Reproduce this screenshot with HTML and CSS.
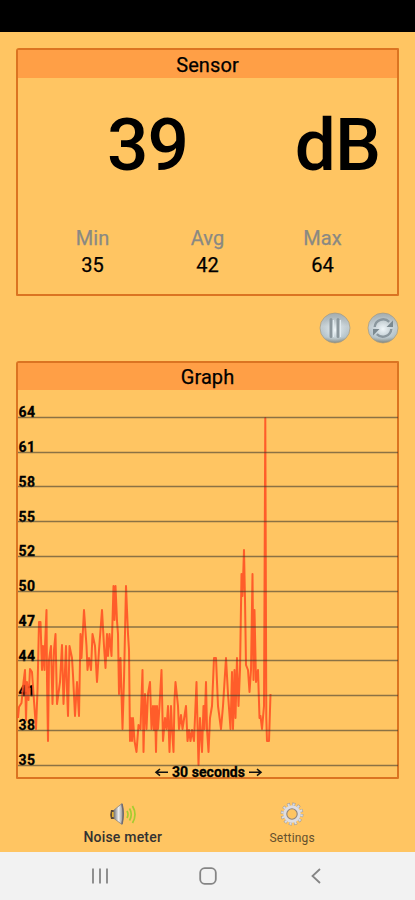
FILE: index.html
```html
<!DOCTYPE html>
<html lang="en">
<head>
    <meta charset="UTF-8">
    <meta name="viewport" content="width=device-width, initial-scale=1.0">
    <title>Noise meter</title>
    <link rel="stylesheet" href="styles.css">
</head>
<body>

<div class="status-bar"></div>

<div class="app">
    <!-- Current reading -->
    <div class="panel sensor">
        <div class="panel-title">Sensor</div>
        <div class="reading">
            <div class="value">39</div>
            <div class="unit">dB</div>
        </div>
        <div class="stats">
            <div class="stat"><span class="stat-name">Min</span><span>35</span></div>
            <div class="stat"><span class="stat-name">Avg</span><span>42</span></div>
            <div class="stat"><span class="stat-name">Max</span><span>64</span></div>
        </div>
    </div>

    <div class="controls">
        <svg width="32" height="32" viewBox="0 0 32 32">
            <defs>
                <linearGradient id="metal" x1="0" y1="0" x2="0" y2="1">
                    <stop offset="0" stop-color="#a3adb0"/>
                    <stop offset="0.45" stop-color="#c3cdd2"/>
                    <stop offset="0.8" stop-color="#b3c2c9"/>
                    <stop offset="1" stop-color="#80867f"/>
                </linearGradient>
                <radialGradient id="shine">
                    <stop offset="0" stop-color="#f1f7fa"/>
                    <stop offset="1" stop-color="#d5e0e5" stop-opacity="0"/>
                </radialGradient>
            </defs>
            <circle cx="16" cy="16" r="15" fill="url(#metal)" stroke="#a49a80" stroke-width="0.7"/>
            <circle cx="16" cy="18" r="13" fill="url(#shine)"/>
            <path d="M12 7.5v17M19 7.5v17" stroke="#8b979d" stroke-width="3" stroke-linecap="round"/>
            <path d="M14.4 8v17M21.4 8v17" stroke="#e3ecf0" stroke-width="1.2"/>
        </svg>
        <svg width="32" height="32" viewBox="0 0 32 32">
            <circle cx="16" cy="16" r="15" fill="url(#metal)" stroke="#a49a80" stroke-width="0.7"/>
            <circle cx="16" cy="17" r="13" fill="url(#shine)"/>
            <path d="M7.7 15a8.5 8.5 0 0 1 14.5-5.2M24.3 17a8.5 8.5 0 0 1-14.5 5.2" fill="none" stroke="#8a979e" stroke-width="2.4"/>
            <path d="M26 8.5v6.5h-6.5zM6 23.5v-6.5h6.5z" fill="#7b8990"/>
        </svg>
    </div>

    <!-- History -->
    <div class="panel graph">
        <div class="panel-title">Graph</div>
        <svg class="plot" width="379" height="388" viewBox="18 390 379 388">
            <g class="labels">
                <text x="18.5" y="417" textLength="16.5">64</text>
                <text x="18.5" y="452" textLength="16.5">61</text>
                <text x="18.5" y="487" textLength="16.5">58</text>
                <text x="18.5" y="522" textLength="16.5">55</text>
                <text x="18.5" y="556" textLength="16.5">52</text>
                <text x="18.5" y="591" textLength="16.5">50</text>
                <text x="18.5" y="626" textLength="16.5">47</text>
                <text x="18.5" y="661" textLength="16.5">44</text>
                <text x="18.5" y="696" textLength="16.5">41</text>
                <text x="18.5" y="730" textLength="16.5">38</text>
                <text x="18.5" y="765" textLength="16.5">35</text>
                <text x="172" y="777" textLength="73">30 seconds</text>
            </g>
            <polyline class="trace" points="18,718 19,707 21.5,703 23.5,682 25,670 26,720 27,682 28.5,700 30,669 32,672 33.5,694 36,729 37.5,690 39,622 40.5,622 42,670 43,646 44.5,670 45,646 46.5,610 47,680 48,741 49,660 51,646 52.5,704 54,650 55.5,634 57,704 60,682 62,645 63.5,704 65,670 66,646 67,690 68,716 69.5,646 72,658 73,675 75,716 77,682 79,716 80.5,634 81.5,658 84,610 86.5,646 87.5,670 89,658 91,670 92.5,634 95,646 97,682 99,650 102,610 104,646 105.5,668 107,634 108,656 109.5,634 111.5,656 113.5,586 114.5,620 115.5,586 117,621 118,634 119,694 120.5,658 122.5,729 124,680 126,586 128,634 129,650 130,741 131,718 132,741 133,718 134.5,741 136.5,752 138.5,725 140.5,729 142.5,670 143.5,752 145,694 146.5,729 148,694 150,682 151.5,729 153,706 154,730 155,706 156,752 157,706 158,729 159.5,706 161.5,670 163,741 165,718 166.5,729 168,706 169.5,752 171,706 172,729 173.5,752 174.5,700 175.5,682 178,706 179,729 181,715 182.5,729 186,706 187.5,741 189,730 190.5,741 192,730 194,741 196.5,682 197.5,725 198.5,765 200,718 202,752 203.5,706 204.5,729 206,682 207,729 208.5,752 210,718 212,706 214,658 216,658 218,706 221,729 223,706 226,658 228,694 230.5,729 232,672 233,729 234.5,670 235.5,718 237,658 238.5,706 240,670 241.5,574 242.5,596 244,550 245,600 246,665 248,670 249.5,692 251,670 252.5,574 253.5,680 254.5,610 256,682 258,670 259.5,718 260.5,716 262,729 264,706 265.3,418 266.3,718 267,741 269,741 270.5,694"/>
            <path class="grid" d="M18 417.5h380M18 452.5h380M18 486.5h380M18 521.5h380M18 556.5h380M18 591.5h380M18 627h380M18 660.5h380M18 695.5h380M18 730.5h380M18 765.5h380"/>
            <path class="arrow" d="M168 772.3h-11M160 769l-4 3.3 4 3.3M249 772.3h11M257 769l4 3.3-4 3.3"/>
        </svg>
    </div>

    <div class="tabs">
        <div class="tab active">
            <svg width="28" height="24" viewBox="0 0 28 24">
                <defs>
                    <linearGradient id="horn" x1="0" y1="0" x2="1" y2="0">
                        <stop offset="0" stop-color="#777"/>
                        <stop offset="0.5" stop-color="#eee"/>
                        <stop offset="1" stop-color="#888"/>
                    </linearGradient>
                </defs>
                <path d="M2 8h4v9H2q-1.5-4.500 0-9z" fill="#5d4932"/>
                <path d="M3 10h2v5H3z" fill="#e8b12c"/>
                <path d="M5 8L13 1.5q2.5 10.5 0 21L5 16.5z" fill="url(#horn)" stroke="#8b8580" stroke-width="0.8"/>
                <path d="M13 2q2.5 10 0 20" fill="none" stroke="#6f6b70" stroke-width="1.5"/>
                <path d="M18 9q2 3.5 0 7M20.5 6.5q3.5 6 0 12M23.500 4q5 8.500 0 17" fill="none" stroke="#a5cc30" stroke-width="1.7"/>
            </svg>
            <span>Noise meter</span>
        </div>
        <div class="tab">
            <svg width="24" height="24" viewBox="0 0 24 24">
                <circle cx="12" cy="12" r="9.7" fill="none" stroke="#9d9a9a" stroke-width="3.4" stroke-dasharray="2.9 2.18"/>
                <circle cx="12" cy="12" r="9.7" fill="none" stroke="#dddddf" stroke-width="2.4" stroke-dasharray="2 3.08" stroke-dashoffset="-.4"/>
                <circle cx="12" cy="12" r="7" fill="none" stroke="#dedde2" stroke-width="3.4"/>
                <circle cx="12" cy="12" r="5.2" fill="none" stroke="#8f8680" stroke-width="1.1"/>
            </svg>
            <span>Settings</span>
        </div>
    </div>
</div>

<!-- System navigation -->
<div class="nav-bar">
    <svg width="18" height="18" viewBox="0 0 18 18"><path d="M2 1.5v15M9 1.5v15M16 1.5v15"/></svg>
    <svg width="18" height="18" viewBox="0 0 18 18"><rect x="1.2" y="1.2" width="15.6" height="15.6" rx="4.5"/></svg>
    <svg width="18" height="18" viewBox="0 0 18 18"><path d="M13 2L5.500 9l7.500 7"/></svg>
</div>

</body>
</html>
```
FILE: styles.css
```css
* { box-sizing: border-box; }
body { margin: 0; width: 415px; height: 900px; font-family: Roboto, "Liberation Sans", sans-serif; color: #000; background-color: #ffc562; overflow: hidden; }
svg { display: block; }
.status-bar { height: 32px; background-color: #000; }
.app { height: 820px; padding: 16px 16px 0; }

.panel { border: 2px solid #db7422; border-radius: 3px 1px 1px 1px; }
.panel-title { height: 27px; line-height: 29px; text-align: center; font-size: 20px; letter-spacing: 0.1px; background-color: #ff9f46; -webkit-text-stroke: 0.25px #000; }
.sensor { height: 248px; }
.sensor .panel-title { height: 28px; line-height: 31px; }
.reading { display: flex; justify-content: space-between; height: 147px; padding: 26px 17px 0 89px; font-size: 73px; line-height: 82px; font-weight: 500; }
.value { letter-spacing: -1px; }
.unit { letter-spacing: -1px; }
.stats { display: grid; grid-template-columns: repeat(3, 115px); justify-content: center; }
.stat { display: flex; flex-direction: column; text-align: center; font-size: 20px; line-height: 27px; -webkit-text-stroke: 0.25px; }
.stat-name { color: #8a8983; }

.controls { display: flex; justify-content: flex-end; gap: 16px; height: 65px; padding-top: 16px; }

.graph { height: 418px; }
.plot { overflow: visible; }
.trace { fill: none; stroke: #ff4f22; stroke-opacity: 0.88; stroke-width: 2; stroke-linejoin: round; }
.grid { fill: none; stroke: #3d3a30; stroke-opacity: 0.6; stroke-width: 1.3; }
.labels { font-size: 14px; font-weight: 700; stroke: #000; stroke-width: 0.3; }
.arrow { fill: none; stroke: #111; stroke-width: 1.6; }

.tabs { display: flex; padding: 23px 22px 0; }
.tab { width: 170px; display: flex; flex-direction: column; align-items: center; font-size: 12px; line-height: 24px; letter-spacing: 0.2px; color: #65502d; }
.active { font-size: 14px; font-weight: 500; line-height: 22px; color: #333231; }

.nav-bar { display: flex; justify-content: space-between; height: 48px; padding: 15px 90px 0 91px; background-color: #f2f2f2; }
.nav-bar svg { fill: none; stroke: #858585; stroke-width: 1.8; }
```
